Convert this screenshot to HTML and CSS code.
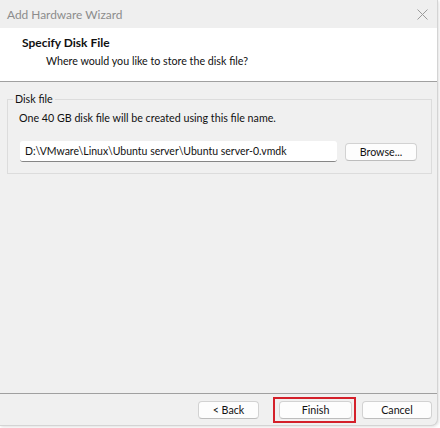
FILE: index.html
```html
<!DOCTYPE html>
<html>
<head>
<meta charset="utf-8">
<link rel="stylesheet" href="styles.css">
</head>
<body>
<div class="window">
  <div class="titlebar">
    <span class="title">Add Hardware Wizard</span>
    <svg class="close" width="11" height="11" viewBox="0 0 11 11"><path d="M0.5 0.5 L10.5 10.5 M10.5 0.5 L0.5 10.5" stroke="#9a9a9a" stroke-width="1" fill="none"/></svg>
  </div>
  <div class="header">
    <div class="h-title">Specify Disk File</div>
    <div class="h-sub">Where would you like to store the disk file?</div>
  </div>
  <div class="content">
    <fieldset class="group">
      <legend>Disk file</legend>
      <div class="desc">One 40 GB disk file will be created using this file name.</div>
      <div class="row">
        <div class="input">D:\VMware\Linux\Ubuntu server\Ubuntu server-0.vmdk</div>
        <div class="btn browse">Browse...</div>
      </div>
    </fieldset>
  </div>
  <div class="footer">
    <div class="btn back">&lt; Back</div>
    <div class="highlight"><div class="btn finish">Finish</div></div>
    <div class="btn cancel">Cancel</div>
  </div>
</div>
</body>
</html>
```
FILE: styles.css
```css
* { box-sizing: border-box; }
html, body { margin: 0; padding: 0; }
body {
  width: 440px; height: 428px; overflow: hidden;
  background: #ffffff;
  font-family: "Lato", "Liberation Sans", sans-serif;
  font-size: 10.7px;
  color: #111;
}
.window {
  width: 438px; height: 426px;
  background: #f0f0f0;
  display: flex; flex-direction: column;
  border-right: 1px solid #d4d4d4;
  border-bottom: 1px solid #d4d4d4;
  border-bottom-right-radius: 7px;
  box-shadow: 1px 1px 3px rgba(0,0,0,0.12);
}
.titlebar {
  height: 28px;
  background: #efefef;
  display: flex; align-items: center; justify-content: space-between;
  padding: 0 9px 0 7px;
}
.title { color: #8c8c8c; font-size: 11.9px; }
.close { margin-top: 1px; }
.header {
  height: 54px;
  background: #ffffff;
  border-bottom: 1px solid #a0a0a0;
  padding: 6px 0 0 22px;
}
.h-title { font-weight: bold; font-size: 12px; line-height: 18px; }
.h-sub { padding-left: 24px; line-height: 18px; }
.content { flex: 1; padding: 10px 5px 0 7px; }
.group {
  margin: 0;
  border: 1px solid #dcdcdc;
  padding: 4px 11px 11px 11px;
}
legend { padding: 0 2px; margin-left: -6px; line-height: 14px; }
.desc { line-height: 16px; margin-bottom: 15px; }
.row { display: flex; align-items: center; gap: 8px; padding-left: 1px; }
.input {
  width: 317px; height: 21px;
  background: #fff;
  border-bottom: 1px solid #868686;
  border-radius: 3px;
  padding: 0 5px; line-height: 20px;
  font-size: 10.5px;
}
.btn {
  background: #fdfdfd;
  border: 1px solid #d2d2d2;
  border-bottom-color: #bdbdbd;
  border-radius: 4px;
  height: 18px; line-height: 16px;
  text-align: center;
}
.browse { width: 72px; }
.footer {
  height: 32px;
  border-top: 1px solid #a0a0a0;
  display: flex; justify-content: flex-end; align-items: center;
  padding: 0 5px 0 0;
}
.back { width: 61px; }
.highlight {
  margin-left: 14px;
  border: 2px solid #d4202a;
  padding: 2px 2px 2px 4px;
}
.finish { width: 73px; }
.cancel { width: 70px; margin-left: 6px; }
```
